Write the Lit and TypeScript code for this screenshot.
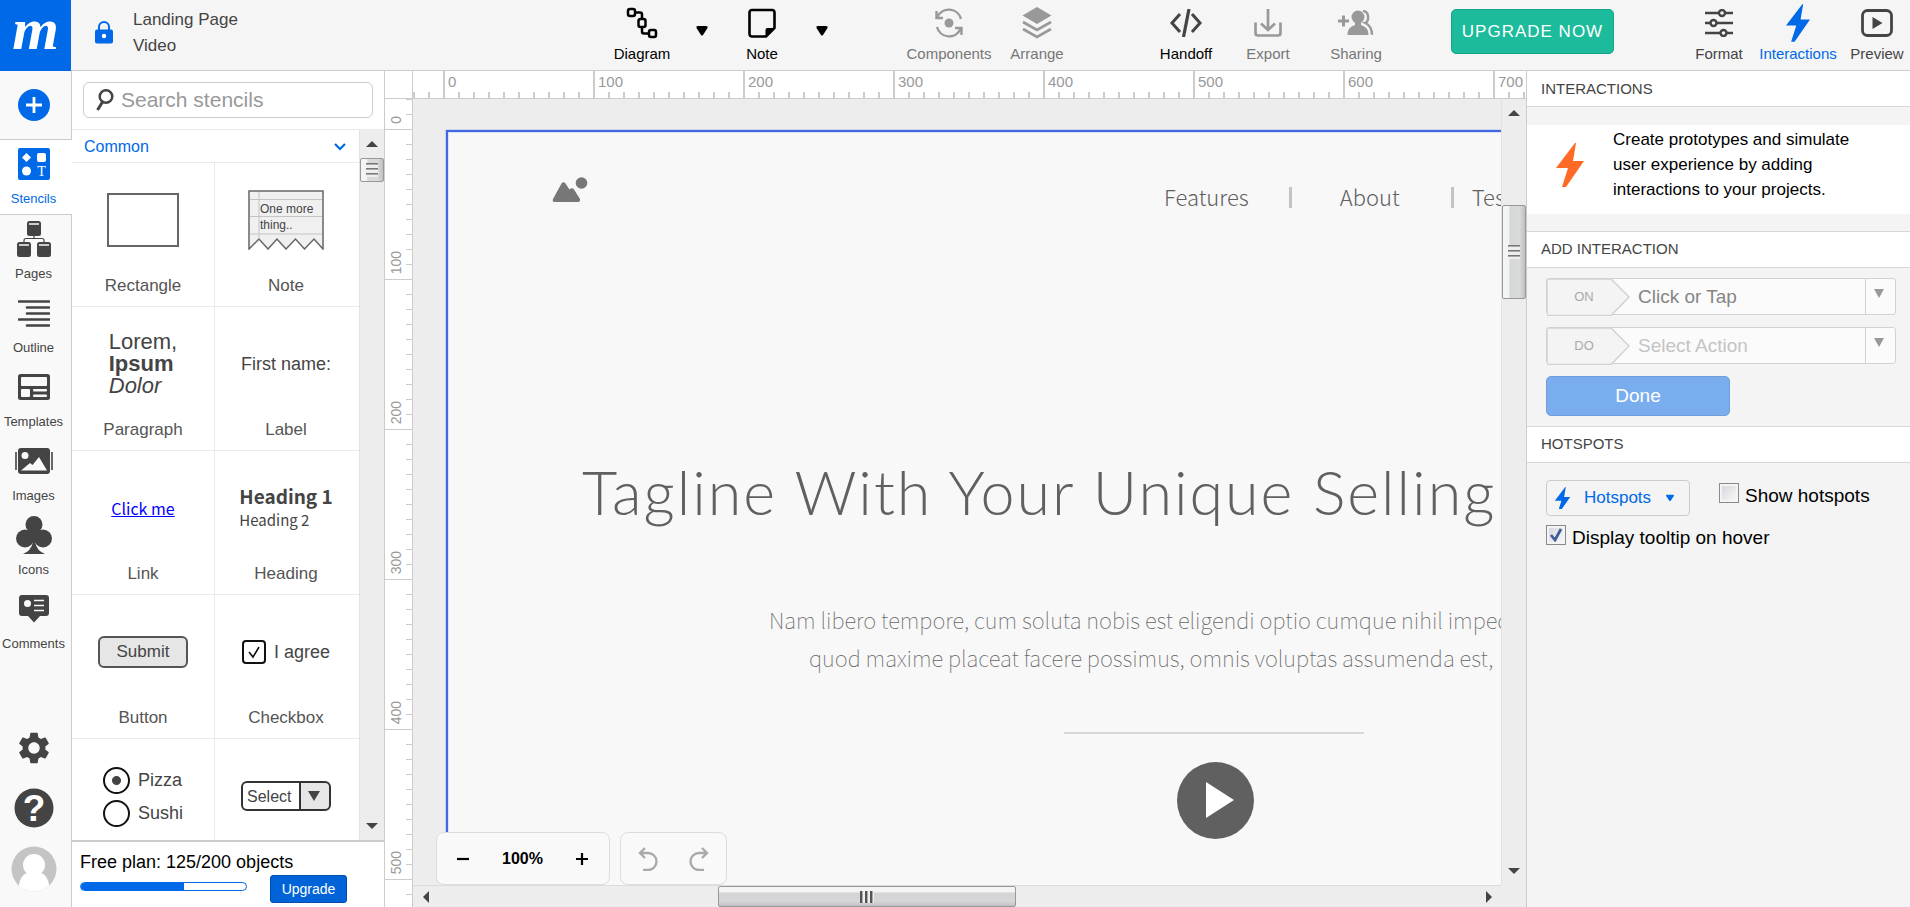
import { LitElement, html, css, svg, TemplateResult } from "lit";
import { customElement, property } from "lit/decorators.js";
import { classMap } from "lit/directives/class-map.js";

const bolt = svg`<path d="M19 0 L0 25 H12 L6 44 H10 L28 18 H17 L20 0 Z" fill="currentColor"/>`;

const ICONS: Record<string, { box: string; w: number; h: number; art: TemplateResult }> = {
  lock: { box: "0 0 18 23", w: 18, h: 23, art: svg`<path d="M4 10 V6 a5 5 0 0 1 10 0 V10" fill="none" stroke="currentColor" stroke-width="2"/><rect x="0" y="8.500" width="18" height="14" rx="2" fill="currentColor"/><circle cx="9" cy="15" r="2.200" fill="#fff"/>` },
  diagram: { box: "0 0 32 32", w: 32, h: 32, art: svg`<g fill="none" stroke="currentColor" stroke-width="2.500"><rect x="2" y="2" width="7" height="7" rx="2"/><rect x="12.500" y="12" width="7" height="8" rx="2"/><rect x="23" y="23" width="7" height="7" rx="2"/><path d="M9 5.500 h5 q2 0 2 2 V12 M16 20 v4.500 q0 2 2 2 h5"/></g>` },
  note: { box: "0 0 28 30", w: 28, h: 30, art: svg`<path d="M4 2 H24 a2.500 2.500 0 0 1 2.500 2.500 V20 L18 28.500 H4 A2.500 2.500 0 0 1 1.500 26 V4.500 A2.500 2.500 0 0 1 4 2 Z" fill="none" stroke="currentColor" stroke-width="2.600"/><path d="M17.500 29 V22 a2 2 0 0 1 2-2 H27 Z" fill="currentColor"/>` },
  caret: { box: "0 0 12 10", w: 12, h: 10, art: svg`<path d="M1.500 0 H10.500 Q12 0 11.500 2 L7 9 Q6 10 5 9 L.500 2 Q0 0 1.500 0Z" fill="currentColor"/>` },
  components: { box: "0 0 30 32", w: 30, h: 32, art: svg`<g fill="none" stroke="currentColor" stroke-width="2.400"><path d="M2.500 4 V11 H9 M3.500 10 A12.500 12.500 0 0 1 27 12"/><path d="M27.500 28 V21 H21 M26.500 22 A12.500 12.500 0 0 1 3 20"/></g><circle cx="15" cy="16" r="4.500" fill="currentColor"/>` },
  arrange: { box: "0 0 30 32", w: 30, h: 32, art: svg`<path d="M15 0 L29.500 8.500 L15 17 L.500 8.500 Z" fill="currentColor"/><path d="M1 15 L15 23 L29 15 M1 22 L15 30 L29 22" fill="none" stroke="currentColor" stroke-width="2.600"/>` },
  handoff: { box: "0 0 32 28", w: 32, h: 28, art: svg`<path d="M10 5 L2 14 L10 23 M22 5 L30 14 L22 23" fill="none" stroke="currentColor" stroke-width="3"/><path d="M19 0 L13.500 28" stroke="currentColor" stroke-width="3.200"/>` },
  export: { box: "0 0 28 28", w: 28, h: 28, art: svg`<path d="M1.500 13.500 V24 a2.500 2.500 0 0 0 2.500 2.500 H24 a2.500 2.500 0 0 0 2.500-2.500 V13.500 M14 0 V20 M7 14.500 L14 21 L21 14.500" fill="none" stroke="currentColor" stroke-width="2.700"/>` },
  sharing: { box: "0 0 36 26", w: 36, h: 26, art: svg`<path d="M0 11 H11 M5.500 5.500 V16.500" stroke="currentColor" stroke-width="3"/><circle cx="20" cy="7" r="6.500" fill="currentColor"/><path d="M9.500 25 C9.500 19 12 17 17 15 V11 H23 V15 C28 17 30.500 19 30.500 25 Z" fill="currentColor"/><path d="M25 .800 c7 1 6 11 2 12 c4 2 7 5 7 12" fill="none" stroke="currentColor" stroke-width="2.400"/>` },
  format: { box: "0 0 28 28", w: 28, h: 28, art: svg`<g stroke="currentColor" stroke-width="2.400" fill="#f5f5f5"><path d="M0 4 H28 M0 14 H28 M0 24 H28"/><circle cx="17" cy="4" r="3"/><circle cx="8.500" cy="14" r="3"/><circle cx="18.500" cy="24" r="3"/></g>` },
  interactions: { box: "0 0 28 44", w: 24, h: 38, art: bolt },
  preview: { box: "0 0 32 28", w: 32, h: 28, art: svg`<rect x="1.500" y="1.500" width="29" height="25" rx="5" fill="none" stroke="currentColor" stroke-width="2.800"/><path d="M11.500 8 L21.500 14 L11.500 20 Z" fill="currentColor"/>` },
  plus: { box: "0 0 32 32", w: 32, h: 32, art: svg`<circle cx="16" cy="16" r="16" fill="currentColor"/><path d="M8 16 H24 M16 8 V24" stroke="#fff" stroke-width="2.800"/>` },
  stencils: { box: "0 0 32 32", w: 32, h: 32, art: svg`<rect width="32" height="32" rx="2" fill="currentColor"/><path d="M8.500 5 L13 9.500 L8.500 14 L4 9.500Z" fill="#fff"/><rect x="19" y="5" width="9" height="9" rx="2" fill="#fff"/><circle cx="8.500" cy="23" r="4.500" fill="#fff"/><text x="23.500" y="28" text-anchor="middle" font-family="Liberation Serif, serif" font-size="14" fill="#fff">T</text>` },
  pages: { box: "0 0 34 36", w: 34, h: 36, art: svg`<g fill="currentColor"><rect x="10" y="0" width="14" height="15" rx="2.500"/><rect x="0" y="21" width="14" height="15" rx="2.500"/><rect x="20" y="21" width="14" height="15" rx="2.500"/></g><path d="M17 15 V18 M7 21 V19.500 a2 2 0 0 1 2-2 H25 a2 2 0 0 1 2 2 V21" fill="none" stroke="currentColor" stroke-width="1.200"/><path d="M12 3 H22 M2 24 H12 M22 24 H32" stroke="#f9f9f9" stroke-width="1.600"/>` },
  outline: { box: "0 0 32 27", w: 32, h: 27, art: svg`<path d="M1 1.500 H31 M9 7.500 H31 M9 13.500 H31 M1 19.500 H31 M9 25.500 H31" stroke="currentColor" stroke-width="2.700" stroke-linecap="round"/>` },
  templates: { box: "0 0 32 26", w: 32, h: 26, art: svg`<rect width="32" height="26" rx="2.500" fill="currentColor"/><g fill="#f9f9f9"><rect x="3" y="3" width="26" height="9" rx="1"/><rect x="3" y="15" width="9" height="8" rx="1"/><rect x="15" y="15" width="14" height="2.500" rx="1"/><rect x="15" y="20.500" width="14" height="2.500" rx="1"/></g>` },
  images: { box: "0 0 38 26", w: 38, h: 26, art: svg`<rect x="3" width="32" height="26" rx="3" fill="currentColor"/><path d="M1 4 V22 M37 4 V22" stroke="currentColor" stroke-width="1.600"/><circle cx="10" cy="7.500" r="3.500" fill="#f9f9f9"/><path d="M6 22.500 L15 15 L17.500 17 L24 9 L32 22.500Z" fill="#f9f9f9"/>` },
  icons: { box: "0 0 36 38", w: 36, h: 38, art: svg`<g fill="currentColor"><circle cx="18" cy="8.500" r="8.500"/><circle cx="9" cy="22.500" r="9"/><circle cx="27" cy="22.500" r="9"/><rect x="13" y="12" width="10" height="14"/><path d="M17 26 H19 Q21 35 29 38 H7 Q15 35 17 26Z"/></g>` },
  comments: { box: "0 0 30 28", w: 30, h: 28, art: svg`<path d="M3 0 H27 a3 3 0 0 1 3 3 V18 a3 3 0 0 1-3 3 H21 L15 27.500 L9 21 H3 a3 3 0 0 1-3-3 V3 a3 3 0 0 1 3-3Z" fill="currentColor"/><circle cx="8.500" cy="8.500" r="3.500" fill="#f9f9f9"/><path d="M15 5.500 H25 M15 10.500 H25 M15 15.500 H25" stroke="#f9f9f9" stroke-width="1.700"/>` },
  gear: { box: "0 0 24 24", w: 38, h: 38, art: svg`<path fill="currentColor" d="M19.140 12.940c.040-.300.060-.610.060-.940 0-.320-.020-.640-.070-.940l2.030-1.580c.180-.140.230-.410.120-.610l-1.920-3.320c-.120-.220-.370-.290-.590-.220l-2.390.960c-.500-.380-1.030-.700-1.620-.940l-.360-2.540c-.040-.240-.240-.410-.480-.410h-3.840c-.240 0-.430.170-.470.410l-.360 2.540c-.590.240-1.130.570-1.620.940l-2.390-.960c-.220-.080-.470 0-.590.220L2.740 8.870c-.120.210-.080.470.120.610l2.030 1.580c-.050.300-.090.630-.090.940s.020.640.070.940l-2.030 1.580c-.180.140-.230.410-.120.610l1.920 3.320c.120.220.370.290.590.220l2.390-.960c.500.380 1.030.700 1.620.940l.360 2.540c.050.240.240.410.480.410h3.840c.240 0 .440-.170.470-.410l.360-2.540c.590-.240 1.130-.560 1.620-.940l2.390.960c.220.080.470 0 .590-.220l1.920-3.320c.120-.220.070-.470-.120-.610l-2.010-1.580zM12 15.600c-1.980 0-3.600-1.620-3.600-3.600s1.620-3.600 3.600-3.600 3.600 1.620 3.600 3.600-1.620 3.600-3.600 3.600z"/>` },
  help: { box: "0 0 40 40", w: 40, h: 40, art: svg`<circle cx="20" cy="20" r="19.500" fill="currentColor"/><text x="20" y="33" text-anchor="middle" font-family="Liberation Sans, sans-serif" font-size="37" font-weight="bold" fill="#fff">?</text>` },
  avatar: { box: "0 0 46 46", w: 46, h: 46, art: svg`<clipPath id="round"><circle cx="23" cy="23" r="22.500"/></clipPath><g clip-path="url(#round)"><rect width="46" height="46" fill="#c4c4c4"/><circle cx="23" cy="19" r="11" fill="#fff"/><path d="M7 46 Q8 28 17 27 H29 Q38 28 39 46Z" fill="#fff"/></g>` },
  search: { box: "0 0 18 22", w: 18, h: 22, art: svg`<circle cx="10" cy="7.500" r="6.300" fill="none" stroke="currentColor" stroke-width="2.500"/><path d="M6.500 13 L1.500 21" stroke="currentColor" stroke-width="3"/>` },
  chevron: { box: "0 0 12 8", w: 12, h: 8, art: svg`<path d="M1 1 L6 6 L11 1" fill="none" stroke="currentColor" stroke-width="2.200"/>` },
  undo: { box: "0 0 20 24", w: 20, h: 24, art: svg`<path d="M7 1 L2 6 L7 11 M2 6 H10 a8.500 8.500 0 0 1 0 17 H5" fill="none" stroke="currentColor" stroke-width="2.400"/>` },
  redo: { box: "0 0 20 24", w: 20, h: 24, art: svg`<path d="M13 1 L18 6 L13 11 M18 6 H10 a8.500 8.500 0 0 0 0 17 H15" fill="none" stroke="currentColor" stroke-width="2.400"/>` },
  minus: { box: "0 0 12 12", w: 12, h: 12, art: svg`<path d="M0 6 H12" stroke="currentColor" stroke-width="2.200"/>` },
  add: { box: "0 0 12 12", w: 12, h: 12, art: svg`<path d="M0 6 H12 M6 0 V12" stroke="currentColor" stroke-width="2.200"/>` },
  bolt: { box: "0 0 28 44", w: 28, h: 44, art: bolt },
  smallBolt: { box: "0 0 28 40", w: 17, h: 22, art: bolt },
  picture: { box: "0 0 36 26", w: 36, h: 26, art: svg`<circle cx="29.500" cy="6" r="5.800" fill="currentColor"/><path d="M1 22 L9.500 6.500 Q11.500 4 13.500 6.500 L17.500 12.500 Q20 10 22 12.500 L28 22 Q28.500 25 26 25 H2.500 Q0 25 1 22Z" fill="currentColor"/>` },
  play: { box: "0 0 77 77", w: 77, h: 77, art: svg`<circle cx="38.500" cy="38.500" r="38.500" fill="currentColor"/><path d="M29 20 L57 38 L29 56Z" fill="#fff"/>` },
};

@customElement("ui-icon")
export class UiIcon extends LitElement {
  static styles = css`
    :host { display: inline-flex; flex: none; }
    svg { display: block; }
  `;
  @property() name = "";
  render() {
    const i = ICONS[this.name];
    return html`<svg width=${i.w} height=${i.h} viewBox=${i.box} aria-hidden="true">${i.art}</svg>`;
  }
}

@customElement("scroll-bar")
export class ScrollBar extends LitElement {
  static styles = css`
    :host { display: block; min-height: 0; min-width: 0; }
    .bar { display: flex; box-sizing: border-box; width: 100%; height: 100%; background: #ededed; align-items: stretch; }
    .vertical { flex-direction: column; border-left: 1px solid #e2e2e2; }
    .horizontal { border-top: 1px solid #dcdcdc; }
    .arrow { flex: none; display: flex; align-items: center; justify-content: center; }
    .vertical .arrow { height: 28px; }
    .horizontal .arrow { width: 25px; }
    .lead { flex: 0 0 auto; }
    .rest { flex: 1; }
    .thumb { flex: none; box-sizing: border-box; border: 1px solid #999; border-radius: 2px; display: flex; align-items: center; justify-content: center; }
    .vertical .thumb { background: linear-gradient(90deg, #f4f4f4 0 25%, #d6d7d9 32%, #d9dadc 75%, #c0c0c2); }
    .horizontal .thumb { background: linear-gradient(#f4f4f4 0 25%, #d4d4d6 32%, #d6d6d8 75%, #c0c0c2); }
    .grip { width: 12px; height: 14px; background: repeating-linear-gradient(#777 0 1px, #aaa 1px 2px, #eee 2px 5px); }
    .horizontal .grip { width: 14px; height: 12px; background: repeating-linear-gradient(90deg, #555 0 2px, #aaa 2px 3px, #eee 3px 5px); }
  `;
  @property() dir = "vertical";
  @property({ type: Number }) lead = 0;
  @property({ type: Number }) size = 24;
  render() {
    const v = this.dir === "vertical";
    return html`<div class="bar ${this.dir}">
      <span class="arrow"><svg width="12" height="12" viewBox="0 0 12 12"><path d=${v ? "M0 9 L6 3 L12 9Z" : "M9 0 L3 6 L9 12Z"} fill="#444" /></svg></span>
      <span class="lead" style=${`flex-basis:${this.lead}px`}></span>
      <span class="thumb" style=${`flex-basis:${this.size}px`}><span class="grip"></span></span>
      <span class="rest"></span>
      <span class="arrow"><svg width="12" height="12" viewBox="0 0 12 12"><path d=${v ? "M0 3 L6 9 L12 3Z" : "M3 0 L9 6 L3 12Z"} fill="#444" /></svg></span>
    </div>`;
  }
}

const RAIL = [
  ["stencils", "Stencils"], ["pages", "Pages"], ["outline", "Outline"], ["templates", "Templates"],
  ["images", "Images"], ["icons", "Icons"], ["comments", "Comments"],
];

@customElement("app-root")
export class AppRoot extends LitElement {
  static styles = css`
    :host { display: flex; flex-direction: column; height: 100vh; overflow: hidden; background: #f4f4f4; color: #444; font-family: "Liberation Sans", Arial, sans-serif; font-size: 15px; }
    * { box-sizing: border-box; }
    button, input, select { font: inherit; color: inherit; margin: 0; }
    button { border: 0; padding: 0; background: none; }
    h1, h2, p { margin: 0; font-weight: normal; }

    .top { flex: none; height: 71px; display: flex; align-items: stretch; background: #f5f5f5; border-bottom: 1px solid #ccc; padding-right: 3px; }
    .logo { width: 71px; height: 71px; background: #0069e8; color: #fff; text-decoration: none; text-align: center; font: italic bold 60px/58px "Liberation Serif", serif; }
    .title { flex: 1; display: flex; gap: 20px; padding: 7px 0 0 24px; font-size: 17px; line-height: 26px; }
    .title ui-icon { color: #0069e8; padding-top: 14px; }
    .group { display: flex; }
    .tool { width: 60px; display: flex; flex-direction: column; align-items: center; white-space: nowrap; color: #444; }
    .tool .pic { height: 45px; display: flex; align-items: center; }
    .tool .name { line-height: 18px; }
    .black { color: #000; }
    .dim { color: #999; }
    .dim .name { color: #777; }
    .on { color: #0069e8; }
    .drop { width: 20px; height: 62px; margin: 0 20px; display: flex; justify-content: center; align-items: center; color: #000; }
    .drop.last { margin-right: 0; }
    .wide { width: 90px; }
    .mid { width: 84px; }
    .g-insert { margin-right: 72px; }
    .g-arrange { gap: 13px; margin-right: 89px; }
    .g-share { gap: 22px; margin-right: 65px; }
    .g-share .tool:last-child { margin-left: 6px; }
    .g-panel { gap: 7px; }
    .upgrade-now { width: 163px; height: 45px; margin: 9px 75px 0 0; background: #1cbb9b; border: 1px solid #12a587; border-radius: 5px; color: #fff; font-size: 17px; letter-spacing: 1px; white-space: nowrap; }

    .work { flex: 1; min-height: 0; display: grid; grid-template-columns: 72px 313px minmax(0, 1fr) 384px; }

    .rail { background: #f9f9f9; border-right: 1px solid #ccc; display: flex; flex-direction: column; align-items: stretch; min-height: 0; }
    .rail .create { height: 68px; padding-right: 3px; display: flex; align-items: center; justify-content: center; color: #0069e8; }
    .tabs { height: 520px; display: flex; flex-direction: column; }
    .tab { flex: 1; display: flex; flex-direction: column; align-items: center; padding: 4px 4px 0 0; font-size: 13px; color: #444; }
    .tab .pic { height: 40px; display: flex; align-items: center; margin-bottom: 7px; }
    .tab.active { color: #0069e8; background: #fff; border: solid #ccc; border-width: 1px 0; margin-right: -1px; padding-right: 5px; }
    .bottom { margin-top: auto; display: flex; flex-direction: column; align-items: center; gap: 18px; padding: 0 4px 15px 0; color: #444; }
    .bottom button { display: flex; }
    .bottom button:first-child { padding-bottom: 3px; }

    .stencils { display: flex; flex-direction: column; min-height: 0; background: #fff; border-right: 1px solid #ccc; }
    .search { margin: 11px 11px; height: 36px; flex: none; display: flex; align-items: center; gap: 7px; padding: 0 12px; border: 1px solid #ccc; border-radius: 6px; }
    .search input { flex: 1; min-width: 0; border: 0; outline: 0; background: none; font-size: 21px; padding: 0; }
    .search input::placeholder { color: #999; opacity: 1; }
    .shelf { flex: 1; min-height: 0; display: grid; grid-template-columns: minmax(0, 1fr) 25px; border-top: 1px solid #eaeaea; }
    .list { overflow: hidden; }
    .cat { width: 100%; height: 33px; display: flex; align-items: center; justify-content: space-between; padding: 1px 13px 0 12px; color: #0069e8; font-size: 16px; border-bottom: 1px solid #eaeaea; }
    .cells { display: grid; grid-template-columns: 143fr 144fr; grid-auto-rows: 144px; }
    .cell { display: flex; flex-direction: column; align-items: center; border-bottom: 1px solid #eaeaea; }
    .cell:nth-child(odd) { border-right: 1px solid #eaeaea; }
    .cell:nth-child(even) { padding-right: 2px; }
    .demo { height: 114px; display: flex; align-items: center; justify-content: center; }
    .caption { font-size: 17px; line-height: 18px; color: #555; }
    .rect { width: 72px; height: 54px; border: 2px solid #666; }
    .memo { display: block; }
    .para { font-size: 22px; line-height: 22px; }
    .field { font-size: 18px; }
    .link { font-family: "Noto Sans CJK SC", sans-serif; font-size: 16px; color: #00f; }
    .heads { font-family: "Noto Sans CJK SC", sans-serif; font-size: 15px; line-height: 24px; }
    .heads strong { display: block; font-size: 19px; line-height: 24px; }
    .submit { width: 90px; height: 32px; background: #e6e6e6; border: 2px solid #555; border-radius: 6px; font-size: 17px; }
    .agree, .choice { display: flex; align-items: center; gap: 8px; font-size: 18px; }
    .box { appearance: none; width: 24px; height: 24px; border: 2px solid #111; border-radius: 4px; background: #fff; }
    .box:checked { background: #fff url("data:image/svg+xml,%3Csvg xmlns='http://www.w3.org/2000/svg' viewBox='0 0 20 20'%3E%3Cpath d='M5 10l4 5 6-10' fill='none' stroke='%23111' stroke-width='1.600'/%3E%3C/svg%3E"); }
    .choices { display: grid; gap: 6px; padding-top: 2px; }
    .dot { appearance: none; width: 27px; height: 27px; border: 2px solid #111; border-radius: 50%; }
    .dot:checked { background: radial-gradient(#444 0 4px, #fff 5px); }
    .pick { display: flex; width: 90px; height: 30px; border: 2px solid #333; border-radius: 6px; overflow: hidden; background: linear-gradient(90deg, #fff 0 56px, #333 56px 58px, #e6e6e6 58px); position: relative; }
    .pick select { appearance: none; border: 0; background: none; width: 100%; padding: 0 4px; font-size: 16px; }
    .pick span { position: absolute; right: 9px; top: 8px; border: solid transparent; border-width: 10px 6px 0; border-top-color: #444; }
    .plan { flex: none; height: 67px; border-top: 2px solid #ccc; padding: 9px 37px 0 8px; color: #000; font-size: 18px; line-height: 22px; }
    .plan-row { display: flex; justify-content: space-between; align-items: flex-start; padding-top: 2px; }
    .meter { width: 167px; height: 9px; margin-top: 7px; border: 1px solid #0069e8; border-radius: 5px; overflow: hidden; }
    .meter div { height: 100%; background: #0069e8; }
    .upgrade { width: 77px; height: 28px; background: #0064d8; border: 1px solid #004fae; border-radius: 3px; color: #fff; font-size: 14px; }

    .editor { min-width: 0; min-height: 0; display: grid; grid-template-columns: 28px minmax(0, 1fr) 25px; grid-template-rows: 28px minmax(0, 1fr) 22px; background: #ededed; }
    .corner { background: #fff; border: solid #ccc; border-width: 0 1px 1px 0; }
    .rule-x { grid-column: 2 / 4; display: flex; overflow: hidden; color: #999; border-bottom: 1px solid #ccc; background: repeating-linear-gradient(90deg, #ccc 0 2px, transparent 2px 15px) 0 100% / 100% 6px no-repeat #fff; }
    .rule-x span { flex: 0 0 150px; border-left: 2px solid #ccc; padding: 2px 0 0 3px; line-height: 18px; }
    .rule-x::before { content: ""; flex: 0 0 30px; }
    .rule-y { grid-row: 2 / 4; display: flex; flex-direction: column; overflow: hidden; color: #999; font-size: 14px; border-right: 1px solid #ccc; background: repeating-linear-gradient(#ccc 0 1px, transparent 1px 15px) 100% 0 / 6px 100% no-repeat #fff; }
    .rule-y div { flex: 0 0 150px; display: flex; align-items: flex-end; padding: 0 0 5px 3px; border-bottom: 1px solid #ccc; }
    .rule-y div:first-child { flex-basis: 31px; }
    .rule-y span { writing-mode: vertical-rl; transform: rotate(180deg); line-height: 16px; }
    .canvas { position: relative; overflow: hidden; color: #606060; font-family: "Noto Sans CJK SC", "Open Sans", sans-serif; font-weight: 300; }
    .page { position: absolute; left: 33px; top: 31px; width: 1540px; height: 1200px; background: #f8f8f8; border: 2px solid #4068e0; box-shadow: 0 0 0 1px #cdd5ec, inset 0 0 0 1px #dbe2f5; }
    .item { position: absolute; white-space: nowrap; }
    .item.picture { left: 104px; top: 45px; color: #777; }
    .item.menu { left: 716px; top: 46px; display: flex; align-items: center; font-size: 22px; line-height: 36px; }
    .menu i { width: 3px; height: 21px; background: #c4c4c4; margin: 2px 48px 0 40px; }
    .menu i:last-of-type { margin: 2px 18px 0 51px; }
    .item.tagline { left: 134px; top: 324px; font: 300 61px/72px Lato, sans-serif; letter-spacing: 2px; }
    .item.copy { left: 321px; top: 468px; color: #666; font-size: 22px; font-weight: 100; line-height: 38px; }
    .copy span { display: block; }
    .copy .second { padding-left: 40px; }
    .item.line { left: 616px; top: 600px; width: 300px; height: 2px; background: #d8d8d8; }
    .item.play { left: 729px; top: 630px; color: #606060; }
    .float { position: absolute; left: 23px; bottom: 0; display: flex; gap: 10px; color: #000; font: bold 16px "Liberation Sans", sans-serif; }
    .pod { height: 53px; background: #f9f9f9; border: 1px solid #ddd; border-radius: 8px; display: flex; align-items: center; justify-content: space-between; padding: 0 21px 0 20px; }
    .pod.zoom { width: 174px; }
    .pod.history { width: 107px; padding: 0 17px; color: #aaa; }
    .pod button { display: flex; }

    .side { border-left: 1px solid #ccc; min-width: 0; }
    .side h2 { height: 36px; padding-left: 14px; background: #fff; border-bottom: 1px solid #d8d8d8; font-size: 15px; line-height: 36px; }
    .side section + section h2 { height: 37px; border-top: 1px solid #d8d8d8; line-height: 34px; }
    .tip { margin: 18px 0 17px; height: 89px; padding: 2px 48px 0 29px; display: flex; gap: 29px; align-items: flex-start; background: #fff; color: #000; font-size: 17px; line-height: 25px; }
    .tip ui-icon { color: #ff6a26; padding-top: 16px; }
    .form { padding: 10px 14px 10px 19px; }
    .act { display: flex; height: 37px; margin-bottom: 12px; position: relative; background: #fbfbfb; border: 1px solid #d2d2d2; border-radius: 3px; }
    .act svg { flex: none; }
    .act .tag { position: absolute; left: 0; width: 74px; line-height: 36px; text-align: center; color: #aaa; font-size: 13px; }
    .act select { appearance: none; flex: 1; border: 0; padding: 0 7px; background: none; color: #858585; font-size: 19px; opacity: 1; }
    .act select.empty { color: #c4c4c4; }
    .act .tri { width: 30px; border-left: 1px solid #d2d2d2; padding: 10px 0 0 8px; }
    .act .tri::before { content: ""; display: block; width: 0; border: solid transparent; border-width: 9px 5px 0; border-top-color: #999; }
    .done { display: block; width: 184px; height: 40px; background: #7aadee; border: 1px solid #6f9fdc; border-radius: 5px; color: #fff; font-size: 19px; }
    .spots { padding: 17px 19px; display: grid; grid-template-columns: 144px auto; gap: 9px 29px; color: #000; font-size: 19px; justify-content: start; }
    .menu-btn { height: 36px; display: flex; align-items: center; gap: 13px; padding: 0 13px 0 7px; border: 1px solid #ccc; border-radius: 4px; color: #0069e8; font-size: 17px; }
    .menu-btn ui-icon:last-child { transform: scale(.700); }
    .check { display: flex; align-items: flex-start; gap: 6px; line-height: 22px; white-space: nowrap; }
    .check span { padding-top: 2px; }
    .check.first { padding-top: 3px; }
    .check.all { grid-column: 1 / 3; }
    .check input { appearance: none; flex: none; width: 20px; height: 20px; border: 1px solid #8a8a8a; background: linear-gradient(135deg, #d2d5da, #fafafa); box-shadow: inset 0 0 0 2px #f4f4f4; }
    .check input:checked { background: url("data:image/svg+xml,%3Csvg xmlns='http://www.w3.org/2000/svg' viewBox='0 0 18 18'%3E%3Cpath d='M4 9l4 5 6-11' fill='none' stroke='%23425a98' stroke-width='2.700'/%3E%3C/svg%3E"), linear-gradient(135deg, #d2d5da, #fafafa); }
  `;

  tool(icon: string, label: string, cls: string) {
    return html`<button class="tool ${cls}"><span class="pic"><ui-icon name=${icon}></ui-icon></span><span class="name">${label}</span></button>`;
  }

  cell(label: string, demo: TemplateResult) {
    return html`<div class="cell"><div class="demo">${demo}</div>${label ? html`<div class="caption">${label}</div>` : ""}</div>`;
  }

  action(tag: string, value: string, empty: boolean) {
    const id = `action-${tag}`;
    return html`<div class="act">
      <svg width="84" height="37" viewBox="0 0 84 37"><path d="M0 0 H64 L82 18 L64 36.500 H0Z" fill="#f4f4f4" stroke="#d2d2d2" stroke-width="1.500" /></svg>
      <label class="tag" for=${id}>${tag}</label>
      <select id=${id} class=${classMap({ empty })} disabled><option>${value}</option></select>
      <span class="tri"></span>
    </div>`;
  }

  render() {
    return html`
      <header class="top">
        <a class="logo" href="#" aria-label="Home">m</a>
        <div class="title"><ui-icon name="lock"></ui-icon><div><div>Landing Page</div><div>Video</div></div></div>
        <div class="group g-insert">
          ${this.tool("diagram", "Diagram", "black")}
          <button class="drop" aria-label="Diagram options"><ui-icon name="caret"></ui-icon></button>
          ${this.tool("note", "Note", "black")}
          <button class="drop last" aria-label="Note options"><ui-icon name="caret"></ui-icon></button>
        </div>
        <div class="group g-arrange">${this.tool("components", "Components", "dim wide")}${this.tool("arrange", "Arrange", "dim")}</div>
        <div class="group g-share">
          <button class="tool"><span class="pic"><ui-icon name="handoff"></ui-icon></span><span class="name black">Handoff</span></button>
          ${this.tool("export", "Export", "dim")}${this.tool("sharing", "Sharing", "dim")}
        </div>
        <button class="upgrade-now">UPGRADE NOW</button>
        <div class="group g-panel">${this.tool("format", "Format", "")}${this.tool("interactions", "Interactions", "on mid")}${this.tool("preview", "Preview", "")}</div>
      </header>

      <main class="work">
        <nav class="rail">
          <button class="create" aria-label="Add"><ui-icon name="plus"></ui-icon></button>
          <div class="tabs">
            ${RAIL.map(([icon, label], i) => html`<button class=${classMap({ tab: true, active: i === 0 })}><span class="pic"><ui-icon name=${icon}></ui-icon></span>${label}</button>`)}
          </div>
          <div class="bottom">
            <button aria-label="Settings"><ui-icon name="gear"></ui-icon></button>
            <button aria-label="Help"><ui-icon name="help"></ui-icon></button>
            <button aria-label="Account"><ui-icon name="avatar"></ui-icon></button>
          </div>
        </nav>

        <aside class="stencils">
          <label class="search"><ui-icon name="search"></ui-icon><input type="text" placeholder="Search stencils" aria-label="Search stencils" /></label>
          <div class="shelf">
            <div class="list">
              <button class="cat">Common<ui-icon name="chevron"></ui-icon></button>
              <div class="cells">
                ${this.cell("Rectangle", html`<div class="rect"></div>`)}
                ${this.cell("Note", html`<svg class="memo" width="76" height="60" viewBox="0 0 76 60">
                  <path d="M1 1 H75 V59 L66 49 L56.500 59 L47.500 49 L38 59 L29 49 L20 59 L11 49 L1 59Z" fill="#f0f0f0" stroke="#666" stroke-width="1.500" />
                  <path d="M2 9.500 H74 M2 26.500 H74 M2 44 H74 M11 2 V49" stroke="#c4c4c4" />
                  <g font-family="Liberation Sans, sans-serif" font-size="12" fill="#444"><text x="12" y="23">One more</text><text x="12" y="39">thing..</text></g>
                </svg>`)}
                ${this.cell("Paragraph", html`<div class="para">Lorem,<br /><b>Ipsum</b><br /><em>Dolor</em></div>`)}
                ${this.cell("Label", html`<span class="field">First name:</span>`)}
                ${this.cell("Link", html`<a class="link" href="#">Click me</a>`)}
                ${this.cell("Heading", html`<div class="heads"><strong>Heading 1</strong>Heading 2</div>`)}
                ${this.cell("Button", html`<button class="submit">Submit</button>`)}
                ${this.cell("Checkbox", html`<label class="agree"><input class="box" type="checkbox" checked />I agree</label>`)}
                ${this.cell("", html`<div class="choices">
                  <label class="choice"><input class="dot" type="radio" name="food" checked />Pizza</label>
                  <label class="choice"><input class="dot" type="radio" name="food" />Sushi</label></div>`)}
                ${this.cell("", html`<div class="pick"><select aria-label="Select"><option>Select</option></select><span></span></div>`)}
              </div>
            </div>
            <scroll-bar lead="0" size="24"></scroll-bar>
          </div>
          <div class="plan">
            Free plan: 125/200 objects
            <div class="plan-row"><div class="meter" role="progressbar" aria-valuenow="125" aria-valuemax="200"><div style=${`width:${(125 / 200) * 100}%`}></div></div><button class="upgrade">Upgrade</button></div>
          </div>
        </aside>

        <section class="editor">
          <div class="corner"></div>
          <div class="rule-x">${[0, 100, 200, 300, 400, 500, 600, 700].map((n) => html`<span>${n}</span>`)}</div>
          <div class="rule-y">${[0, 100, 200, 300, 400, 500].map((n) => html`<div><span>${n}</span></div>`)}<div></div></div>
          <div class="canvas">
            <div class="page">
              <ui-icon class="item picture" name="picture"></ui-icon>
              <div class="item menu"><span>Features</span><i></i><span>About</span><i></i><span>Testimonials</span></div>
              <h1 class="item tagline">Tagline With Your Unique Selling</h1>
              <p class="item copy"><span>Nam libero tempore, cum soluta nobis est eligendi optio cumque nihil impedit</span><span class="second">quod maxime placeat facere possimus, omnis voluptas assumenda est,</span></p>
              <div class="item line"></div>
              <ui-icon class="item play" name="play"></ui-icon>
            </div>
            <div class="float">
              <div class="pod zoom"><button aria-label="Zoom out"><ui-icon name="minus"></ui-icon></button>100%<button aria-label="Zoom in"><ui-icon name="add"></ui-icon></button></div>
              <div class="pod history"><button aria-label="Undo"><ui-icon name="undo"></ui-icon></button><button aria-label="Redo"><ui-icon name="redo"></ui-icon></button></div>
            </div>
          </div>
          <scroll-bar lead="78" size="94"></scroll-bar>
          <scroll-bar dir="horizontal" lead="280" size="298"></scroll-bar>
        </section>

        <aside class="side">
          <section>
            <h2>INTERACTIONS</h2>
            <div class="tip"><ui-icon name="bolt"></ui-icon><p>Create prototypes and simulate user experience by adding interactions to your projects.</p></div>
          </section>
          <section>
            <h2>ADD INTERACTION</h2>
            <div class="form">
              ${this.action("ON", "Click or Tap", false)}
              ${this.action("DO", "Select Action", true)}
              <button class="done">Done</button>
            </div>
          </section>
          <section>
            <h2>HOTSPOTS</h2>
            <div class="spots">
              <button class="menu-btn"><ui-icon name="smallBolt"></ui-icon>Hotspots<ui-icon name="caret"></ui-icon></button>
              <label class="check first"><input type="checkbox" /><span>Show hotspots</span></label>
              <label class="check all"><input type="checkbox" checked /><span>Display tooltip on hover</span></label>
            </div>
          </section>
        </aside>
      </main>
    `;
  }
}
